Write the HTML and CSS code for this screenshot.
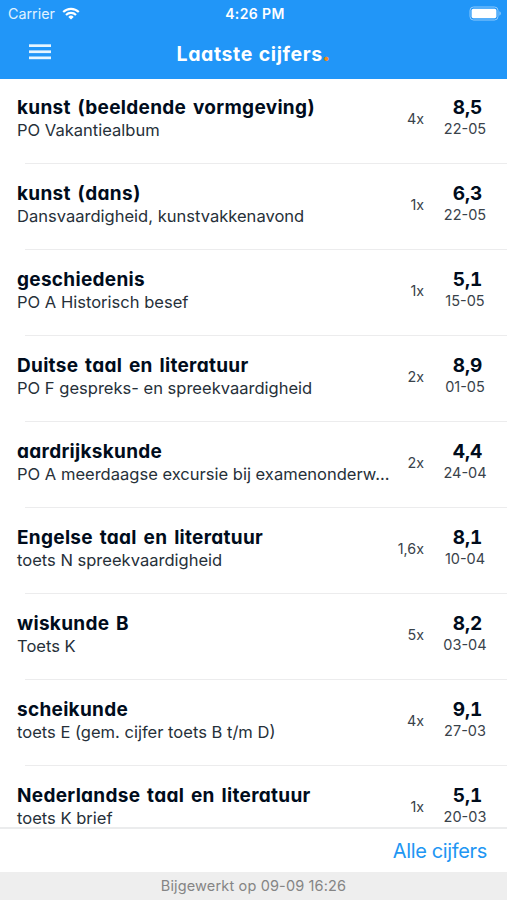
FILE: index.html
```html
<!DOCTYPE html>
<html lang="nl">

<head>
    <meta charset="UTF-8">
    <meta name="viewport" content="width=device-width, initial-scale=1.0">
    <title>Laatste cijfers</title>
    <link rel="stylesheet" href="styles.css">
</head>

<body>
    <header>
        <div class="status-bar">
            <div class="carrier">
                <span>Carrier</span>
                <svg class="wifi" width="18" height="13" viewBox="0 0 18 13" fill="none" stroke="#fff" stroke-width="2.1">
                    <path d="M1.2 5.1a11 11 0 0 1 15.6 0" />
                    <path d="M4 8a7 7 0 0 1 10 0" />
                    <path d="M9 12.6 6.3 9.9a3.8 3.8 0 0 1 5.4 0z" fill="#fff" stroke="none" />
                </svg>
            </div>
            <span class="time">4:26 PM</span>
            <svg class="battery" width="33" height="15" viewBox="0 0 33 15">
                <rect x="1" y="1" width="28" height="13" rx="3.5" fill="none" stroke="#8fcafc" stroke-width="1" />
                <rect x="2.6" y="2.7" width="24.8" height="9.6" rx="1.8" fill="#fff" />
                <path d="M30.4 5.3v4.4a2.4 2.4 0 0 0 0-4.4z" fill="#8fcafc" />
            </svg>
        </div>
        <div class="title-bar">
            <button class="menu" aria-label="Menu">
                <svg width="22" height="16" viewBox="0 0 22 16" fill="#e6f5ff">
                    <rect y="0.3" width="22" height="2.7" />
                    <rect y="6.4" width="22" height="2.7" />
                    <rect y="12.5" width="22" height="2.7" />
                </svg>
            </button>
            <h1>Laatste cijfers<span class="dot">.</span></h1>
        </div>
    </header>

    <main>
        <ul class="grades">
            <li>
                <div class="subject">
                    <h2>kunst (beeldende vormgeving)</h2>
                    <p>PO Vakantiealbum</p>
                </div>
                <span class="weight">4x</span>
                <div class="result"><strong>8,5</strong><span>22-05</span></div>
            </li>
            <li>
                <div class="subject">
                    <h2>kunst (dans)</h2>
                    <p>Dansvaardigheid, kunstvakkenavond</p>
                </div>
                <span class="weight">1x</span>
                <div class="result"><strong>6,3</strong><span>22-05</span></div>
            </li>
            <li>
                <div class="subject">
                    <h2>geschiedenis</h2>
                    <p>PO A Historisch besef</p>
                </div>
                <span class="weight">1x</span>
                <div class="result"><strong>5,1</strong><span>15-05</span></div>
            </li>
            <li>
                <div class="subject">
                    <h2>Duitse taal en literatuur</h2>
                    <p>PO F gespreks- en spreekvaardigheid</p>
                </div>
                <span class="weight">2x</span>
                <div class="result"><strong>8,9</strong><span>01-05</span></div>
            </li>
            <li>
                <div class="subject">
                    <h2>aardrijkskunde</h2>
                    <p>PO A meerdaagse excursie bij examenonderw...</p>
                </div>
                <span class="weight">2x</span>
                <div class="result"><strong>4,4</strong><span>24-04</span></div>
            </li>
            <li>
                <div class="subject">
                    <h2>Engelse taal en literatuur</h2>
                    <p>toets N spreekvaardigheid</p>
                </div>
                <span class="weight">1,6x</span>
                <div class="result"><strong>8,1</strong><span>10-04</span></div>
            </li>
            <li>
                <div class="subject">
                    <h2>wiskunde B</h2>
                    <p>Toets K</p>
                </div>
                <span class="weight">5x</span>
                <div class="result"><strong>8,2</strong><span>03-04</span></div>
            </li>
            <li>
                <div class="subject">
                    <h2>scheikunde</h2>
                    <p>toets E (gem. cijfer toets B t/m D)</p>
                </div>
                <span class="weight">4x</span>
                <div class="result"><strong>9,1</strong><span>27-03</span></div>
            </li>
            <li>
                <div class="subject">
                    <h2>Nederlandse taal en literatuur</h2>
                    <p>toets K brief</p>
                </div>
                <span class="weight">1x</span>
                <div class="result"><strong>5,1</strong><span>20-03</span></div>
            </li>
        </ul>
    </main>

    <div class="all-grades">
        <a href="#">Alle cijfers</a>
    </div>
    <footer>Bijgewerkt op 09-09 16:26</footer>
</body>

</html>
```

FILE: styles.css
```css
* {
    box-sizing: border-box;
}

body {
    margin: 0;
    height: 900px;
    font-family: Inter, 'Liberation Sans', sans-serif;
    color: #000c1c;
    background: #fff;
    display: flex;
    flex-direction: column;
    overflow: hidden;
}

header {
    flex: none;
    height: 79px;
    background: #2196f8;
    color: #fff;
}

.status-bar {
    display: grid;
    grid-template-columns: 1fr auto 1fr;
    align-items: center;
    height: 27px;
    padding: 0 5px 0 8px;
}

.carrier {
    display: flex;
    align-items: center;
    gap: 7px;
    font-size: 14.3px;
    color: #e0f2ff;
}

.time {
    font-size: 14px;
    font-weight: 600;
    letter-spacing: 0.4px;
}

.battery {
    justify-self: end;
}

.title-bar {
    display: grid;
    grid-template-columns: 80px 1fr 80px;
    align-items: center;
    height: 52px;
}

.menu {
    width: 22px;
    height: 16px;
    margin: 0 0 2px 29px;
    padding: 0;
    border: none;
    background: none;
}

.menu svg {
    display: block;
}

h1,
h2,
.result strong {
    font-feature-settings: 'cv11', 'tnum';
    font-weight: 700;
}

h1 {
    margin: 2px 0 0;
    font-size: 19.5px;
    text-align: center;
    letter-spacing: 0.6px;
}

.dot {
    color: #f28a1c;
    font-size: 26px;
    line-height: 0;
}

main {
    flex: none;
    height: 748px;
    overflow: hidden;
}

.grades {
    list-style: none;
    margin: -1px 0 0;
    padding: 0;
}

.grades li {
    display: flex;
    height: 86px;
    padding: 17px 20px 0 17px;
    background: linear-gradient(#ececed, #ececed) 25px 85px / 100% 1px no-repeat;
}

.subject {
    flex: 1;
    min-width: 0;
    white-space: nowrap;
}

h2 {
    margin: 0;
    font-size: 19px;
    line-height: 25px;
    letter-spacing: 0.3px;
    word-spacing: 1.4px;
}

.subject p {
    margin: -1px 0 0;
    font-size: 16.55px;
    line-height: 22px;
    color: #263039;
}

.weight {
    padding-top: 14px;
    font-size: 14.3px;
    line-height: 20px;
    color: #39424a;
}

.result {
    display: flex;
    flex-direction: column;
    align-items: center;
    width: 44px;
    margin-left: 19px;
    white-space: nowrap;
}

.result strong {
    font-size: 19px;
    line-height: 25px;
    padding-left: 5px;
}

.result span {
    margin-top: -1px;
    font-size: 14.5px;
    line-height: 19px;
    color: #39424a;
}

.all-grades {
    flex: none;
    height: 45px;
    padding-right: 20px;
    border-top: 2px solid #ebeced;
    text-align: right;
}

.all-grades a {
    font-size: 20px;
    line-height: 44px;
    letter-spacing: -0.35px;
    color: #2196f3;
    text-decoration: none;
}

footer {
    flex: 1;
    background: #eee;
    color: #858585;
    font-size: 14.5px;
    letter-spacing: 0.15px;
    line-height: 28px;
    text-align: center;
}
```
